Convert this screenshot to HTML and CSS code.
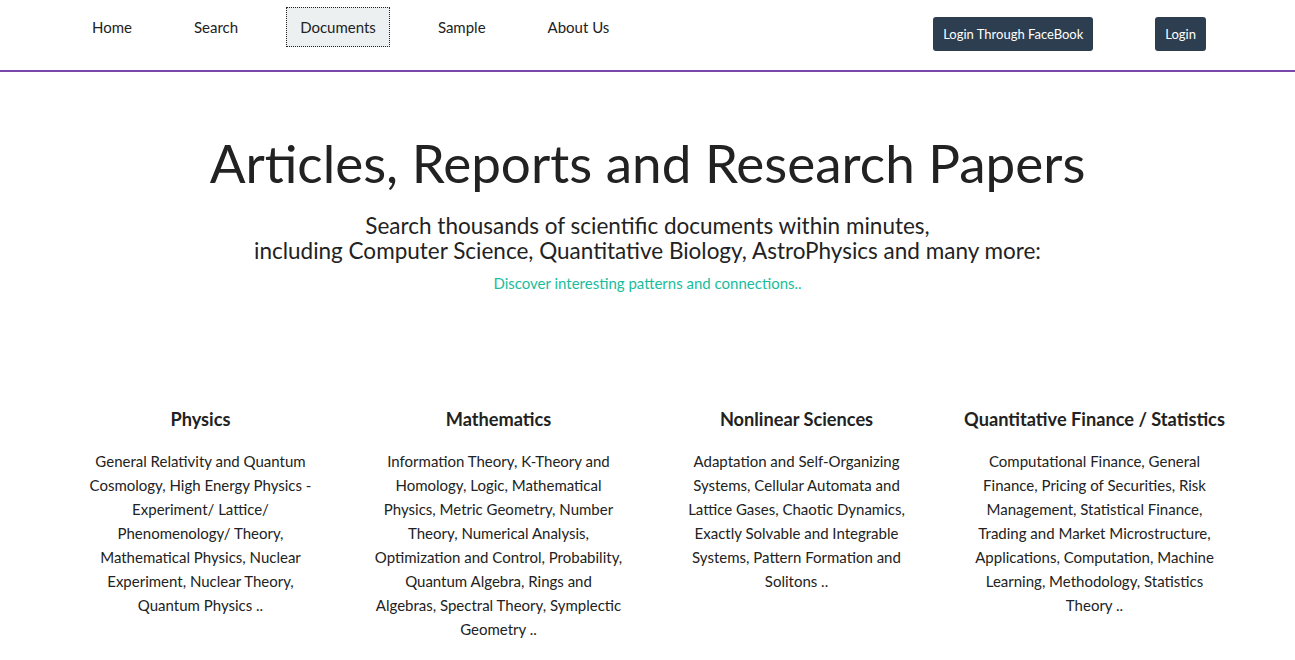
FILE: index.html
```html
<!DOCTYPE html>
<html lang="en">
<head>
<meta charset="utf-8">
<title>Articles, Reports and Research Papers</title>
<link rel="stylesheet" href="styles.css">
</head>
<body>
<header class="topbar">
  <nav class="nav">
    <a class="nav-item" href="#">Home</a>
    <a class="nav-item" href="#">Search</a>
    <a class="nav-item active" href="#">Documents</a>
    <a class="nav-item" href="#">Sample</a>
    <a class="nav-item" href="#">About Us</a>
  </nav>
  <div class="actions">
    <button class="btn">Login Through FaceBook</button>
    <button class="btn">Login</button>
  </div>
</header>
<main>
  <section class="hero">
    <h1 class="title">Articles, Reports and Research Papers</h1>
    <p class="lead">Search thousands of scientific documents within minutes,<br>including Computer Science, Quantitative Biology, AstroPhysics and many more:</p>
    <p class="tagline">Discover interesting patterns and connections..</p>
  </section>
  <section class="cols">
    <div class="col">
      <h3>Physics</h3>
      <p>General Relativity and Quantum Cosmology, High Energy Physics - Experiment/ Lattice/ Phenomenology/ Theory, Mathematical Physics, Nuclear Experiment, Nuclear Theory, Quantum Physics ..</p>
    </div>
    <div class="col">
      <h3>Mathematics</h3>
      <p>Information Theory, K-Theory and Homology, Logic, Mathematical Physics, Metric Geometry, Number Theory, Numerical Analysis, Optimization and Control, Probability, Quantum Algebra, Rings and Algebras, Spectral Theory, Symplectic Geometry ..</p>
    </div>
    <div class="col">
      <h3>Nonlinear Sciences</h3>
      <p>Adaptation and Self-Organizing Systems, Cellular Automata and Lattice Gases, Chaotic Dynamics, Exactly Solvable and Integrable Systems, Pattern Formation and Solitons ..</p>
    </div>
    <div class="col">
      <h3>Quantitative Finance / Statistics</h3>
      <p>Computational Finance, General Finance, Pricing of Securities, Risk Management, Statistical Finance, Trading and Market Microstructure, Applications, Computation, Machine Learning, Methodology, Statistics Theory ..</p>
    </div>
  </section>
</main>
</body>
</html>
```
FILE: styles.css
```css
html, body {
  margin: 0;
  padding: 0;
  background: #ffffff;
  font-family: Lato, "Open Sans", sans-serif;
  color: #222222;
}

.topbar {
  height: 70px;
  border-bottom: 2px solid #7b47aa;
  display: flex;
  align-items: flex-start;
  justify-content: space-between;
  box-sizing: content-box;
}

.nav {
  display: flex;
  gap: 34px;
  margin-left: 78px;
  margin-top: 7px;
}

.nav-item {
  display: block;
  height: 38px;
  line-height: 38px;
  padding: 0 13px;
  font-size: 15px;
  color: #222222;
  text-decoration: none;
  border: 1px dotted transparent;
}

.nav-item.active {
  background: #ecf0f1;
  border-color: #222222;
}

.actions {
  display: flex;
  gap: 62px;
  margin-top: 17px;
  margin-right: 89px;
}

.btn {
  height: 34px;
  padding: 0 10px;
  border: none;
  border-radius: 3px;
  background: #2c3e50;
  color: #ffffff;
  font-family: Lato, sans-serif;
  font-size: 13px;
}

.hero {
  text-align: center;
  padding-top: 55px;
}

.title {
  margin: 0;
  font-size: 53px;
  font-weight: 400;
  line-height: 72px;
  color: #222222;
}

.lead {
  margin: 14px 0 0;
  font-size: 22.5px;
  line-height: 25px;
  color: #222222;
}

.tagline {
  margin: 10px 0 0;
  font-size: 15px;
  line-height: 20px;
  color: #1abc9c;
}

.cols {
  display: grid;
  grid-template-columns: repeat(4, 298px);
  justify-content: center;
  margin-top: 114px;
}

.col {
  text-align: center;
  padding: 0 24px;
}

.col h3 {
  margin: 0 -20px;
  font-size: 18.2px;
  font-weight: 700;
  line-height: 24px;
  color: #222222;
  white-space: nowrap;
}

.col p {
  margin: 18px 0 0;
  font-size: 15px;
  line-height: 24px;
  color: #222222;
}
```
